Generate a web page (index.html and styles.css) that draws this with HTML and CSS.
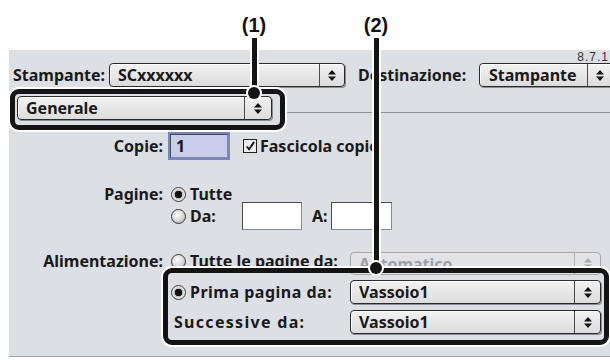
FILE: index.html
```html
<!DOCTYPE html>
<html lang="it">
<head>
    <meta charset="UTF-8">
    <meta name="viewport" content="width=device-width, initial-scale=1.0">
    <title>Stampa - Generale</title>
    <link rel="stylesheet" href="styles.css">
</head>
<body>
<div class="page">
    <div class="top-space"></div>

    <div class="dialog">
        <div class="version">8.7.1</div>

        <div class="top-row">
            <span class="label printer-label">Stampante:</span>
            <div class="popup printer-popup">
                <span class="popup-text">SCxxxxxx</span>
                <span class="popup-arrow"><svg width="8" height="11" viewBox="0 0 8 11"><path d="M0 4.5 L4 0 L8 4.5 Z M0 6.5 L4 11 L8 6.5 Z" fill="#111"/></svg></span>
            </div>
            <span class="label dest-label">Destinazione:</span>
            <div class="popup dest-popup">
                <span class="popup-text">Stampante</span>
                <span class="popup-arrow"><svg width="8" height="11" viewBox="0 0 8 11"><path d="M0 4.5 L4 0 L8 4.5 Z M0 6.5 L4 11 L8 6.5 Z" fill="#111"/></svg></span>
            </div>
        </div>

        <div class="panel-row">
            <div class="popup panel-popup">
                <span class="popup-text">Generale</span>
                <span class="popup-arrow"><svg width="8" height="11" viewBox="0 0 8 11"><path d="M0 4.5 L4 0 L8 4.5 Z M0 6.5 L4 11 L8 6.5 Z" fill="#111"/></svg></span>
            </div>
            <div class="panel-line"></div>
        </div>

        <div class="form">
            <div class="row copies-row">
                <span class="label">Copie:</span>
                <div class="controls">
                    <div class="field field-focus">1</div>
                    <span class="checkbox"><svg width="13" height="13" viewBox="0 0 13 13"><path d="M3 6.5 L5.5 9.5 L11 1.5" fill="none" stroke="#111" stroke-width="2"/></svg></span>
                    <span class="text">Fascicola copie</span>
                </div>
            </div>

            <div class="row pages-row">
                <span class="label">Pagine:</span>
                <div class="controls">
                    <span class="radio checked"></span>
                    <span class="text">Tutte</span>
                </div>
            </div>

            <div class="row range-row">
                <span class="label"></span>
                <div class="controls">
                    <span class="option from-option"><span class="radio"></span><span class="text">Da:</span></span>
                    <div class="field range-field"></div>
                    <span class="text to-label">A:</span>
                    <div class="field range-field"></div>
                </div>
            </div>

            <div class="row source-row">
                <span class="label">Alimentazione:</span>
                <div class="controls">
                    <span class="option source-option"><span class="radio"></span><span class="text">Tutte le pagine da:</span></span>
                    <div class="popup tray-popup disabled">
                        <span class="popup-text">Automatico</span>
                        <span class="popup-arrow"><svg width="8" height="11" viewBox="0 0 8 11"><path d="M0 4.5 L4 0 L8 4.5 Z M0 6.5 L4 11 L8 6.5 Z" fill="#a8abb0"/></svg></span>
                    </div>
                </div>
            </div>

            <div class="row first-row">
                <span class="label"></span>
                <div class="controls">
                    <span class="option source-option first-option"><span class="radio checked"></span><span class="text">Prima pagina da:</span></span>
                    <div class="popup tray-popup">
                        <span class="popup-text">Vassoio1</span>
                        <span class="popup-arrow"><svg width="8" height="11" viewBox="0 0 8 11"><path d="M0 4.5 L4 0 L8 4.5 Z M0 6.5 L4 11 L8 6.5 Z" fill="#111"/></svg></span>
                    </div>
                </div>
            </div>

            <div class="row next-row">
                <span class="label"></span>
                <div class="controls">
                    <span class="option source-option next-option"><span class="text">Successive da:</span></span>
                    <div class="popup tray-popup">
                        <span class="popup-text">Vassoio1</span>
                        <span class="popup-arrow"><svg width="8" height="11" viewBox="0 0 8 11"><path d="M0 4.5 L4 0 L8 4.5 Z M0 6.5 L4 11 L8 6.5 Z" fill="#111"/></svg></span>
                    </div>
                </div>
            </div>
        </div>
    </div>

    <!-- callout marks drawn over the dialog -->
    <div class="highlight highlight-panel"></div>
    <div class="highlight highlight-paper"></div>

    <div class="callout callout-1">
        <span class="callout-num">(1)</span>
        <span class="callout-line"></span>
        <span class="callout-dot"></span>
    </div>
    <div class="callout callout-2">
        <span class="callout-num">(2)</span>
        <span class="callout-line"></span>
        <span class="callout-dot"></span>
    </div>
</div>
</body>
</html>
```

FILE: styles.css
```css
body {
    margin: 0;
    background-color: #fff;
    font-family: "Noto Sans", "DejaVu Sans", sans-serif;
    color: #1a1a1a;
}

.page {
    position: relative;
    width: 610px;
    height: 360px;
    overflow: hidden;
}

.top-space {
    height: 50px;
}

.dialog {
    margin-left: 9px;
    width: 620px;
    height: 306px;
    background-color: #dcdfe3;
    border-bottom: 1px solid #9ea1a6;
}

.version {
    height: 13px;
    padding-right: 20px;
    text-align: right;
    font-family: "Liberation Sans", Arial, sans-serif;
    font-size: 12px;
    letter-spacing: 1px;
    line-height: 14px;
    color: #333;
}

.label {
    font-weight: bold;
    font-size: 16px;
    white-space: nowrap;
}

.text {
    font-weight: bold;
    font-size: 16px;
    white-space: nowrap;
}

/* top bar: printer and destination */
.top-row {
    display: flex;
    align-items: center;
    height: 24px;
}

.printer-label {
    width: 96px;
    padding-left: 4px;
}

.printer-popup {
    width: 236px;
}

.dest-label {
    width: 121px;
    padding-left: 13px;
}

.dest-popup {
    width: 140px;
}

/* popup menus */
.popup {
    display: flex;
    align-items: center;
    box-sizing: border-box;
    height: 24px;
    border: 1px solid #2b2b2b;
    border-radius: 4px;
    background: linear-gradient(#f2f2f2, #dcdcdc);
    box-shadow: 1px 1px 0 #8c8e92, inset 1px 1px 0 #fff;
}

.popup-text {
    flex: 1;
    padding-left: 8px;
    font-weight: bold;
    font-size: 16px;
    white-space: nowrap;
}

.popup-arrow {
    display: flex;
    align-items: center;
    justify-content: center;
    width: 24px;
    height: 100%;
    border-left: 1px solid #4a4a4a;
}

.dest-popup .popup-text {
    padding-left: 9px;
}

.dest-popup .popup-arrow {
    width: 24px;
    margin-right: 6px;
}

.popup.disabled {
    border-color: #a4a7ac;
    background: #e1e3e7;
    box-shadow: none;
}

.popup.disabled .popup-text {
    color: #9c9fa4;
}

.popup.disabled .popup-arrow {
    border-left-color: #b0b3b8;
}

/* panel selector */
.panel-row {
    display: flex;
    height: 43px;
}

.panel-popup {
    width: 255px;
    margin-top: 9px;
    margin-left: 8px;
}

.panel-popup .popup-arrow {
    width: 26px;
}

.panel-line {
    flex: 1;
    height: 1px;
    margin-top: 25px;
    margin-left: 13px;
    background-color: #8f9297;
}

/* form rows */
.row {
    display: grid;
    grid-template-columns: 154px 1fr;
    column-gap: 8px;
    align-items: center;
}

.row .label {
    text-align: right;
}

.controls {
    display: flex;
    align-items: center;
}

.copies-row {
    height: 28px;
    margin-top: 2px;
}

.pages-row {
    height: 20px;
    margin-top: 23px;
}

.range-row {
    height: 28px;
    margin-top: -1px;
}

.source-row {
    height: 22px;
    margin-top: 20px;
}

.source-row .label,
.source-row .option {
    margin-bottom: 5px;
}

.first-row {
    height: 24px;
    margin-top: 8px;
}

.next-row {
    height: 24px;
    margin-top: 6px;
}

.field {
    box-sizing: border-box;
    background-color: #fff;
    border-top: 1px solid #4b4b4b;
    border-left: 1px solid #4b4b4b;
    border-right: 1px solid #8a8c90;
    border-bottom: 1px solid #8a8c90;
}

.field-focus {
    width: 58px;
    height: 24px;
    margin-left: -1px;
    padding-left: 5px;
    background-color: #c9cdea;
    box-shadow: 0 0 0 2px #7886c6;
    font-weight: bold;
    font-size: 16px;
    line-height: 22px;
}

.checkbox {
    display: flex;
    box-sizing: border-box;
    width: 14px;
    height: 14px;
    margin-left: 15px;
    margin-right: 3px;
    border: 1px solid #222;
    background-color: #ececec;
}

.radio {
    display: inline-block;
    box-sizing: border-box;
    width: 15px;
    height: 15px;
    margin-right: 4px;
    border: 1px solid #3a3a3a;
    border-radius: 50%;
    background: radial-gradient(circle at 40% 35%, #ffffff, #d6d6d6 55%, #9c9c9c);
}

.radio.checked {
    background: radial-gradient(circle, #111 0 3.5px, #bdbdbd 4px, #ececec 6px);
}

.option {
    display: flex;
    align-items: center;
}

.from-option {
    width: 71px;
}

.range-field {
    width: 60px;
    height: 28px;
}

.to-label {
    width: 29px;
    padding-left: 10px;
    box-sizing: border-box;
}

.range-field + .to-label + .range-field {
    width: 61px;
}

.source-option {
    width: 179px;
}

.first-option .text {
    letter-spacing: 0.5px;
}

.next-option {
    padding-left: 3px;
    box-sizing: border-box;
}

.next-option .text {
    letter-spacing: 1.3px;
}

.tray-popup {
    width: 251px;
}

.tray-popup .popup-arrow {
    width: 25px;
}

.first-row .tray-popup,
.next-row .tray-popup {
    height: 24px;
}

.source-row .tray-popup {
    height: 23px;
}

/* callout highlights */
.highlight {
    position: absolute;
    box-sizing: border-box;
    border: 5px solid #141414;
    border-radius: 9px;
    box-shadow: 0 0 0 2px #fff;
}

.highlight-panel {
    left: 10px;
    top: 89px;
    width: 275px;
    height: 41px;
}

.highlight-paper {
    left: 163px;
    top: 268px;
    width: 446px;
    height: 77px;
}

.callout {
    position: absolute;
    top: 0;
    width: 40px;
}

.callout-1 {
    left: 234px;
}

.callout-2 {
    left: 356px;
}

.callout-num {
    position: absolute;
    top: 13px;
    left: 0;
    width: 40px;
    text-align: center;
    font-family: "Liberation Sans", Arial, sans-serif;
    font-weight: bold;
    font-size: 20px;
    line-height: 24px;
    color: #111;
}

.callout-line {
    position: absolute;
    top: 38px;
    left: 18px;
    width: 5px;
    background-color: #141414;
    box-shadow: 0 0 0 2px #fff;
}

.callout-1 .callout-line {
    height: 54px;
}

.callout-2 .callout-line {
    height: 230px;
}

.callout-dot {
    position: absolute;
    left: 14px;
    width: 12px;
    height: 12px;
    border-radius: 50%;
    background-color: #141414;
    box-shadow: 0 0 0 2px #fff;
}

.callout-1 .callout-dot {
    top: 87px;
}

.callout-2 .callout-dot {
    top: 262px;
}
```
